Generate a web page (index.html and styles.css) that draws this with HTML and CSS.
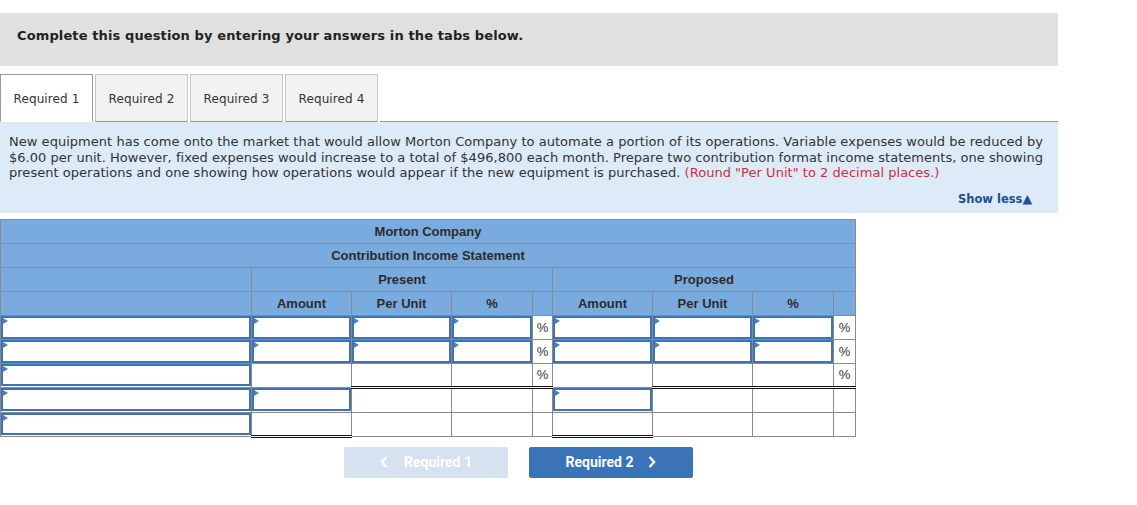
FILE: index.html
```html
<!DOCTYPE html>
<html>
<head>
<meta charset="utf-8">
<link rel="stylesheet" href="styles.css">
</head>
<body>
<div class="page">
  <div class="instructions">Complete this question by entering your answers in the tabs below.</div>
  <div class="tabs">
    <div class="tab active">Required 1</div>
    <div class="tab">Required 2</div>
    <div class="tab">Required 3</div>
    <div class="tab">Required 4</div>
    <div class="tab-fill"></div>
  </div>
  <div class="panel">
    <p class="question">New equipment has come onto the market that would allow Morton Company to automate a portion of its operations. Variable expenses would be reduced by $6.00 per unit. However, fixed expenses would increase to a total of $496,800 each month. Prepare two contribution format income statements, one showing present operations and one showing how operations would appear if the new equipment is purchased. <span class="hint">(Round "Per Unit" to 2 decimal places.)</span></p>
    <div class="showless">Show less<span class="tri">&#9650;</span></div>
  </div>

  <table class="stmt">
    <colgroup>
      <col class="c-label"><col class="c-amt"><col class="c-amt"><col class="c-pct"><col class="c-sign">
      <col class="c-amt"><col class="c-amt"><col class="c-pct"><col class="c-sign2">
    </colgroup>
    <tr class="hd"><th colspan="9">Morton Company</th></tr>
    <tr class="hd"><th colspan="9">Contribution Income Statement</th></tr>
    <tr class="hd"><th></th><th colspan="4" class="grp">Present</th><th colspan="4" class="grp">Proposed</th></tr>
    <tr class="hd"><th></th><th>Amount</th><th>Per Unit</th><th>%</th><th></th><th>Amount</th><th>Per Unit</th><th>%</th><th></th></tr>
    <tr>
      <td class="in"><div class="inp"></div></td>
      <td class="in"><div class="inp"></div></td>
      <td class="in"><div class="inp"></div></td>
      <td class="in"><div class="inp"></div></td>
      <td class="sign">%</td>
      <td class="in"><div class="inp"></div></td>
      <td class="in"><div class="inp"></div></td>
      <td class="in"><div class="inp"></div></td>
      <td class="sign">%</td>
    </tr>
    <tr>
      <td class="in"><div class="inp"></div></td>
      <td class="in"><div class="inp"></div></td>
      <td class="in"><div class="inp"></div></td>
      <td class="in"><div class="inp"></div></td>
      <td class="sign">%</td>
      <td class="in"><div class="inp"></div></td>
      <td class="in"><div class="inp"></div></td>
      <td class="in"><div class="inp"></div></td>
      <td class="sign">%</td>
    </tr>
    <tr class="r-dbl">
      <td class="in"><div class="inp"></div></td>
      <td class="top"></td>
      <td class="top dbl"></td>
      <td class="top dbl"></td>
      <td class="sign top dbl">%</td>
      <td class="top"></td>
      <td class="top dbl"></td>
      <td class="top dbl"></td>
      <td class="sign top dbl">%</td>
    </tr>
    <tr>
      <td class="in"><div class="inp"></div></td>
      <td class="in"><div class="inp"></div></td>
      <td></td>
      <td></td>
      <td></td>
      <td class="in"><div class="inp"></div></td>
      <td></td>
      <td></td>
      <td></td>
    </tr>
    <tr class="r-dbl">
      <td class="in"><div class="inp"></div></td>
      <td class="top dbl"></td>
      <td></td>
      <td></td>
      <td></td>
      <td class="top dbl"></td>
      <td></td>
      <td></td>
      <td></td>
    </tr>
  </table>

  <div class="nav">
    <div class="btn disabled"><svg class="chev" width="8" height="12" viewBox="0 0 8 12"><polyline points="6.5,1 1.8,6 6.5,11" fill="none" stroke="#ffffff" stroke-width="2.2"/></svg>Required 1</div>
    <div class="btn primary">Required 2<svg class="chev right" width="8" height="12" viewBox="0 0 8 12"><polyline points="1.5,1 6.2,6 1.5,11" fill="none" stroke="#ffffff" stroke-width="2.2"/></svg></div>
  </div>
</div>
</body>
</html>
```

FILE: styles.css
```css
html, body {
  margin: 0;
  padding: 0;
  background: #ffffff;
}
.page {
  width: 1058px;
  padding-top: 13px;
  font-family: "DejaVu Sans", Verdana, sans-serif;
  color: #333333;
}
.instructions {
  background: #e0e0e0;
  height: 53px;
  box-sizing: border-box;
  padding: 15px 0 0 17px;
  font-size: 13px;
  font-weight: bold;
  line-height: 16px;
  letter-spacing: 0.12px;
  color: #222222;
}
.tabs {
  display: flex;
  margin-top: 8px;
  height: 48px;
}
.tab {
  width: 93px;
  box-sizing: border-box;
  height: 48px;
  margin-right: 2px;
  background: #f2f2f2;
  border: 1px solid #c6c6c6;
  border-bottom: 1px solid #9a9a9a;
  font-size: 12px;
  line-height: 48px;
  letter-spacing: 0.1px;
  text-align: center;
  color: #333333;
}
.tab.active {
  background: #ffffff;
  border-bottom-color: #ffffff;
  border-left-color: #9a9a9a;
  border-top-color: #9a9a9a;
  border-right-color: #9a9a9a;
}
.tab-fill {
  flex: 1;
  border-bottom: 1px solid #9a9a9a;
}
.panel {
  background: #dcebf7;
  height: 91px;
  box-sizing: border-box;
  padding: 12px 14px 0 9px;
}
.question {
  margin: 0;
  font-size: 13px;
  line-height: 15.6px;
  letter-spacing: 0.03px;
  color: #333333;
}
.hint {
  color: #c8323a;
}
.showless {
  text-align: right;
  font-size: 11.5px;
  font-weight: bold;
  color: #22508e;
  padding-right: 12px;
  margin-top: 11px;
  line-height: 14px;
}
.tri {
  font-size: 12.5px;
}
.stmt {
  margin-top: 6px;
  border-collapse: collapse;
  table-layout: fixed;
  width: 856px;
  font-family: "Liberation Sans", Arial, sans-serif;
  font-size: 13px;
}
.c-label { width: 251px; }
.c-amt { width: 100px; }
.c-pct { width: 81px; }
.c-sign { width: 20px; }
.c-sign2 { width: 22px; }
.stmt th, .stmt td {
  border: 1px solid #8a8a8a;
  padding: 0;
  height: 23px;
}
.stmt th {
  background: #7aabdf;
  color: #2c2c2c;
  font-weight: bold;
  text-align: center;
  line-height: 21px;
}
.stmt tr:nth-child(4) th + th {
  border-top: 1px solid #111111;
}
.stmt td.sign {
  text-align: center;
  color: #333333;
  font-size: 13px;
  line-height: 22px;
}
.stmt td.top {
  border-top: 1px solid #111111;
}
.stmt td.dbl {
  border-bottom: 3px double #111111;
}
.stmt td.in {
  vertical-align: top;
}
.stmt tr.r-dbl td {
  height: 22px;
}
.inp {
  position: relative;
  height: 23px;
  box-sizing: border-box;
  border: 2px solid #3d72b5;
  background: #ffffff;
}
.r-dbl .inp {
  height: 22px;
}
.inp::before {
  content: "";
  position: absolute;
  left: 0;
  top: 0;
  width: 0;
  height: 0;
  border-top: 3px solid transparent;
  border-bottom: 3px solid transparent;
  border-left: 5px solid #4a7fc0;
}
.nav {
  display: flex;
  gap: 21px;
  padding-left: 344px;
  margin-top: 9px;
}
.btn {
  width: 164px;
  height: 31px;
  border-radius: 2px;
  font-family: Roboto, "Liberation Sans", Arial, sans-serif;
  font-weight: bold;
  font-size: 14px;
  line-height: 31px;
  text-align: center;
  color: #ffffff;
}
.btn.disabled {
  background: #d6e2f0;
}
.btn.primary {
  background: #3a73b8;
}
.chev {
  display: inline-block;
  vertical-align: -1px;
  margin-right: 16px;
}
.chev.right {
  margin-right: 0;
  margin-left: 15px;
}
```
